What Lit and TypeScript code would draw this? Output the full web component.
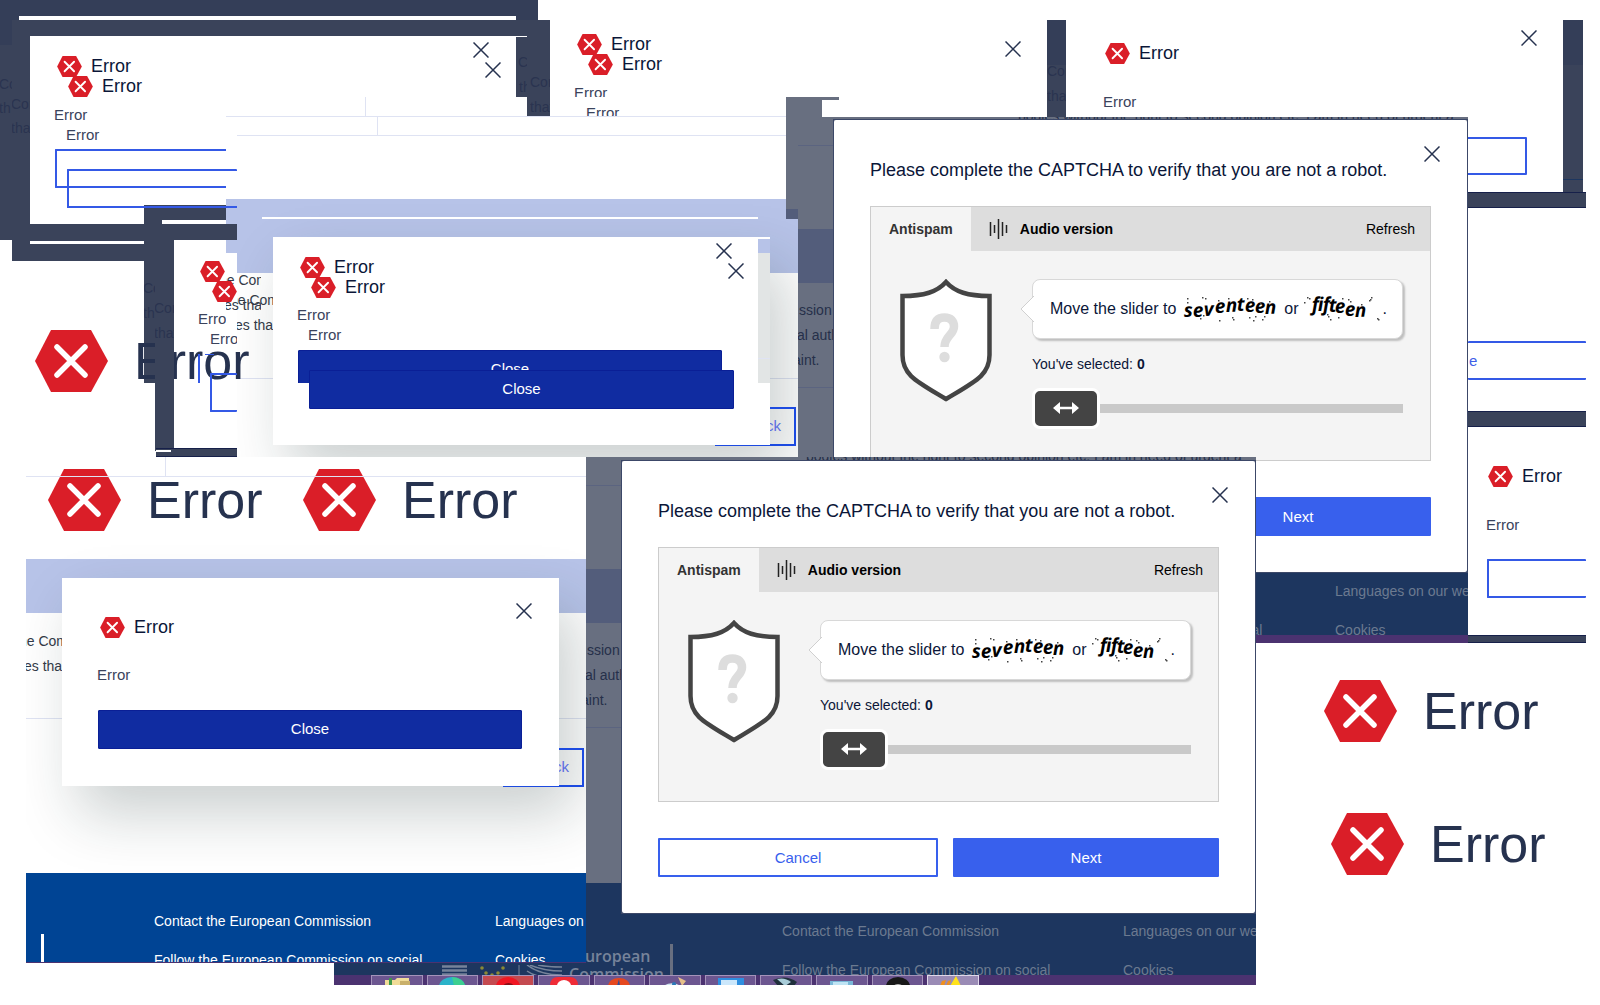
import { LitElement, html, css, svg, nothing } from "lit";
import { customElement, property } from "lit/decorators.js";
import { styleMap } from "lit/directives/style-map.js";

/** Red hexagon with a white cross and, unless it is bare, the heading next to it. */
@customElement("error-title")
class ErrorTitle extends LitElement {
  @property({ type: Boolean, reflect: true }) large = false;
  @property({ type: Boolean }) bare = false;
  @property() label = "Error";

  static styles = css`
    :host { display: block; }
    .row { display: flex; align-items: center; gap: 9px; min-height: 24px; }
    .mark { display: block; width: 25px; height: 21px; flex: none; }
    .text {
      margin: 0; font: 400 18px/24px "Liberation Sans", Arial, sans-serif;
      color: #0b1638; white-space: nowrap;
    }
    :host([large]) .row { gap: 26px; }
    :host([large]) .mark { width: 73px; height: 62px; }
    :host([large]) .text { font-size: 52px; line-height: 60px; color: #26324f; }
  `;

  render() {
    return html`
      <div class="row">
        <svg class="mark" viewBox="0 0 73 62" aria-hidden="true">
          <polygon points="16,0 56,0 73,31 56,62 16,62 0,31" fill="#da1e28" />
          <path d="M22 17 L50 45 M50 17 L22 45" stroke="#fff" stroke-width="5.500" stroke-linecap="round" />
        </svg>
        ${this.bare ? nothing : html`<h2 class="text">${this.label}</h2>`}
      </div>
    `;
  }
}

@customElement("close-button")
class CloseButton extends LitElement {
  static styles = css`
    :host { display: block; width: 16px; height: 16px; }
    .x { display: block; width: 16px; height: 16px; padding: 0; border: 0; background: none; }
    .icon { display: block; }
  `;
  render() {
    return html`
      <button class="x" aria-label="Close">
        <svg class="icon" width="16" height="16" viewBox="0 0 16 16">
          <path d="M0.5 0.5 L15.5 15.5 M15.5 0.5 L0.5 15.5" stroke="#26324f" stroke-width="1.5" />
        </svg>
      </button>
    `;
  }
}

/** Distorted word of the captcha: each letter has its own baseline. */
interface Warped {
  word: string;
  width: number;
  xs: string;
  ys: string;
  dots: [number, number][];
}

const SEVENTEEN: Warped = {
  word: "seventeen",
  width: 98,
  xs: "3 12 23 34 45 56 64 74 84",
  ys: "22 22 21 18 17 16 17 18 19",
  dots: [[6, 3], [6, 7], [21, 2], [24, 3], [37, 5], [66, 3], [71, 4], [88, 6], [19, 23], [22, 20],
    [38, 25], [51, 22], [52, 24], [68, 22], [72, 25], [74, 21], [81, 24], [83, 21], [47, 3], [79, 8]],
};

const FIFTEEN: Warped = {
  word: "fifteen",
  width: 74,
  xs: "8 14 19 25 31 41 51",
  ys: "16 16 16 17 18 21 22",
  dots: [[0, 7], [3, 2], [5, 3], [24, 21], [26, 24], [66, 4], [67, 2], [65, 5], [73, 23], [74, 24],
    [46, 6], [44, 4], [38, 3], [23, 19], [34, 22], [57, 9]],
};

@customElement("captcha-dialog")
class CaptchaDialog extends LitElement {
  @property() uid = "a";

  static styles = css`
    :host {
      display: block; box-sizing: border-box; background: #fff; padding: 38px 36px 36px;
      color: #0b1638; font-family: "Liberation Sans", Arial, sans-serif; position: relative;
      border-radius: 2px;
    }
    .close { position: absolute; top: 26px; right: 27px; }
    .title { margin: 0 0 24px; font-size: 18px; line-height: 24px; font-weight: 400; white-space: nowrap; }
    .box { border: 1px solid #ccc; background: #f4f4f4; box-sizing: border-box; height: 255px; }
    .tabs { display: flex; height: 44px; background: #ddd; color: #000; }
    .tab {
      border: 0; background: none; padding: 0 18px; display: flex; align-items: center; gap: 12px;
      font: 700 14px/20px "Liberation Sans", Arial, sans-serif; color: #000;
    }
    .active { background: #f4f4f4; color: #333; }
    .refresh { margin-left: auto; padding: 0 15px; font-weight: 400; }
    .body { display: flex; gap: 40px; padding: 28px 27px 0 29px; align-items: flex-start; }
    .shield { flex: none; display: block; }
    .side { flex: 1; min-width: 0; }
    .bubble {
      position: relative; box-sizing: border-box; height: 60px; border: 1px solid #d8d8d8;
      border-radius: 8px; background: #fff; box-shadow: 2px 2px 2px rgba(0, 0, 0, 0.22);
      display: flex; align-items: center; padding-left: 17px; gap: 5px;
      font-size: 16px; white-space: nowrap;
    }
    .tail { position: absolute; left: -13px; top: 16px; }
    .word { display: block; flex: none; overflow: visible; }
    .picked { display: block; margin-top: 15px; font-size: 14px; line-height: 20px; }
    .range {
      appearance: none; display: block; width: 100%; height: 40px; margin: 14px 0 0;
      background: linear-gradient(#c9c9c9, #c9c9c9) center / 100% 9px no-repeat;
    }
    .range::-webkit-slider-thumb {
      appearance: none; box-sizing: border-box; width: 68px; height: 41px;
      border: 3px solid #fff; border-radius: 8px;
      background: #444 url('data:image/svg+xml,<svg xmlns="http://www.w3.org/2000/svg" width="28" height="14" viewBox="0 0 28 14"><path d="M6 7H22" stroke="white" stroke-width="2.6"/><path d="M1 7L8 1V13ZM27 7L20 1V13Z" fill="white"/></svg>') center no-repeat;
    }
    .actions { display: grid; grid-template-columns: 20fr 19fr; gap: 15px; margin-top: 36px; }
    .btn {
      height: 39px; border: 2px solid #3860ed; border-radius: 1px; background: #fff; color: #3860ed;
      font: 400 15px/20px "Liberation Sans", Arial, sans-serif;
    }
    .primary { background: #3860ed; color: #fff; }
  `;

  private warped(w: Warped) {
    return html`
      <svg class="word" width=${w.width} height="28" viewBox="0 0 ${w.width} 28">
        <text x=${w.xs} y=${w.ys} rotate="-2" font-family="Open Sans, Noto Sans, sans-serif"
          font-size="19" font-weight="700" font-style="italic" fill="#000">${w.word}</text>
        ${w.dots.map(([x, y]) => svg`<rect x=${x} y=${y} width="1.500" height="1.500" fill="#444" />`)}
      </svg>
    `;
  }

  render() {
    const id = `slider-${this.uid}`;
    return html`
      <close-button class="close"></close-button>
      <h2 class="title">Please complete the CAPTCHA to verify that you are not a robot.</h2>
      <div class="box">
        <div class="tabs">
          <button class="tab active">Antispam</button>
          <button class="tab">
            <svg width="19" height="20" viewBox="0 0 19 20" aria-hidden="true">
              <path d="M1.5 3V17M5.5 6V14M9.5 0V20M13.5 3V17M17.5 6V14" stroke="#222" stroke-width="1.5" />
            </svg>
            Audio version
          </button>
          <button class="tab refresh">Refresh</button>
        </div>
        <div class="body">
          <svg class="shield" width="92" height="124" viewBox="0 0 92 124" aria-hidden="true">
            <path d="M46 3 C37 13 24 17 2.500 17 V76 C2.500 96 16 102 46 120 C76 102 89.500 96 89.500 76 V17 C68 17 55 13 46 3 Z"
              fill="#fff" stroke="#444" stroke-width="4.500" />
            <path d="M34.500 50 C34.500 41 39 38.500 44.500 38.500 C51 38.500 54 42 54 47.500 C54 56 44.500 57 44.500 68" fill="none"
              stroke="#ddd" stroke-width="8.500" />
            <circle cx="44.500" cy="78" r="5.200" fill="#ddd" />
          </svg>
          <div class="side">
            <div class="bubble">
              <svg class="tail" width="14" height="26" viewBox="0 0 14 26" aria-hidden="true">
                <path d="M14 0 L1 13 L14 26" fill="#fff" stroke="#d0d0d0" />
              </svg>
              <span>Move the slider to</span>${this.warped(SEVENTEEN)}<span>or</span>${this.warped(FIFTEEN)}<span>.</span>
            </div>
            <label class="picked" for=${id}>You've selected: <b>0</b></label>
            <input class="range" id=${id} type="range" min="0" max="20" value="0" />
          </div>
        </div>
      </div>
      <div class="actions">
        <button class="btn">Cancel</button>
        <button class="btn primary">Next</button>
      </div>
    `;
  }
}

type Box = [x: number, y: number, w: number, h: number];

const at = ([x, y, w, h]: Box) =>
  styleMap({ left: `${x}px`, top: `${y}px`, width: `${w}px`, height: `${h}px` });

/** A rectangle on the canvas that clips whatever it holds. */
const piece = (box: Box, cls: string, content: unknown = nothing) =>
  html`<div class="piece ${cls}" style=${at(box)}>${content}</div>`;

/** A text line, placed by its left edge and vertical middle. */
const line = (x: number, middle: number, text: string, cls = "") =>
  html`<span class="line ${cls}" style=${styleMap({ left: `${x}px`, top: `${middle - 10}px` })}>${text}</span>`;

const title = (x: number, middle: number, bare = false) =>
  html`<error-title class="spot" ?bare=${bare} style=${styleMap({ left: `${x}px`, top: `${middle - 12}px` })}></error-title>`;

const bigTitle = (x: number, y: number) =>
  html`<error-title large class="spot" style=${styleMap({ left: `${x}px`, top: `${y}px` })}></error-title>`;

const cross = (cx: number, cy: number) =>
  html`<close-button class="spot" style=${styleMap({ left: `${cx - 8}px`, top: `${cy - 8}px` })}></close-button>`;

const TASK_ICONS = [
  svg`<path d="M2 4H12L14 2H26V10H2Z" fill="#f0dc98"/><path d="M6 2H9V10H6Z" fill="#3f9a4a"/><path d="M17 5H27V10H17Z" fill="#c9b06a"/>`,
  svg`<path d="M1 10A13 9 0 0 1 27 10Z" fill="#2bb3c9"/><path d="M14 1A13 9 0 0 1 27 10H16Z" fill="#3ccf91"/>`,
  svg`<path d="M2 10A12 9 0 0 1 26 10Z" fill="#f01622"/><path d="M9 10A6 5 0 0 1 20 10Z" fill="#8a0f16"/>`,
  svg`<path d="M0 10Q0 1 8 1H20Q28 1 28 10Z" fill="#ef2b36"/><path d="M7 10A7 6 0 0 1 21 10Z" fill="#fff"/>`,
  svg`<path d="M3 10A11 8 0 0 1 25 10Z" fill="#e5481f"/><path d="M14 3L12 10H15Z" fill="#2a4fa0"/>`,
  svg`<path d="M3 10A9 5 0 0 1 19 10Z" fill="#cfe4ef"/><path d="M17 1L25 5L21 10Z" fill="#e6c08a"/><circle cx="13" cy="8" r="2" fill="#2a78b8"/>`,
  svg`<path d="M1 2H27V10H1Z" fill="#2f8fe0"/><path d="M4 4H20V10H4Z" fill="#cbe7fb"/>`,
  svg`<path d="M1 4Q14 -2 25 6L22 10H6Z" fill="#20303c"/><path d="M5 3Q13 1 19 6L13 10Z" fill="#a8ccd8"/>`,
  svg`<path d="M2 5H25V10H2Z" fill="#7ab8d8"/><path d="M5 6H20V10H5Z" fill="#bfe4f4"/>`,
  svg`<path d="M2 10A12 9 0 0 1 26 10Z" fill="#181818"/><path d="M9 10A6 4 0 0 1 19 10Z" fill="#e8e8e8"/>`,
  svg`<path d="M17 0L22 10H11Z" fill="#ffe21a"/><path d="M3 5L7 4L5 10H1Z" fill="#f0901c"/><path d="M9 5L12 4L10 10H7Z" fill="#f0901c"/>`,
];

@customElement("app-root")
class AppRoot extends LitElement {
  static styles = css`
    :host { display: block; font-family: "Liberation Sans", Arial, sans-serif; }
    .board { position: relative; min-height: 100vh; overflow: hidden; background: #fff; }
    .piece { position: absolute; box-sizing: border-box; overflow: hidden; }
    .spot { position: absolute; }
    .line {
      position: absolute; font-size: 15px; line-height: 20px; white-space: nowrap; color: #3a435c;
    }
    .white { background: #fff; }
    .dark { background: #3a435a; }
    .dark-top { background: linear-gradient(#343e58 45px, #3a435a 45px); }
    .edge { border-top: 1px solid #16204a; border-bottom: 1px solid #16204a; }
    .frame { border: 1px solid #3c4868; }
    .lavender { background: #b7c3e8; }
    .pale { background: #e2e5e5; }
    .rule { background: #dfe3f3; }
    .veil { background: #686f80; }
    .veil-band { background: #535d7b; }
    .veil-rule { background: #5b6480; }
    .night { background: #1d365f; }
    .purple { background: #4b3270; }
    .royal { background: #004494; }
    .ink { background: #3459e6; }
    .outline { border: 2px solid #3459e6; border-radius: 1px; }
    .open-right { border-right: 0; }
    .open-left { border-left: 0; }
    .faint { color: #2a3450; font-size: 14px; }
    .under { color: #26304a; font-size: 14px; }
    .body-text { color: #333a48; font-size: 14px; }
    .blue { color: #3f5fe8; }
    .link { color: #fff; font-size: 14px; text-decoration: none; }
    .dim { color: #6c7a90; font-size: 14px; text-decoration: none; }
    .logo { color: #76839a; font: 600 16px/20px "Open Sans", "Noto Sans", sans-serif; }
    .shade { box-shadow: 16px 28px 56px rgba(20, 40, 40, 0.22); overflow: visible; }
    .close {
      position: absolute; box-sizing: border-box; border: 1px solid #0a1f96; border-radius: 1px;
      background: #102ca1; color: #fff; font: 400 15px/20px "Liberation Sans", Arial, sans-serif;
      padding: 0 0 2px;
    }
    .back {
      position: absolute; box-sizing: border-box; border: 2px solid #1c4ae0; background: none; padding: 0 13px 2px 0;
      text-align: right; color: #5a6ce0; font: 400 15px/20px "Liberation Sans", Arial, sans-serif;
    }
    .tasks { display: grid; grid-template-columns: repeat(11, 1fr); gap: 4px; padding: 0 277px 0 37px; }
    .task {
      height: 24px; padding: 0; border: 1px solid #a493ba; background: #6c5690;
      display: flex; justify-content: center; align-items: flex-start;
    }
    .hot { background: #c44a50; }
    .current { background: #9a8bb5; border-color: #e0d8ea; }
  `;

  private link(x: number, middle: number, text: string, cls: string) {
    return html`<a class="line ${cls}" href="#" style=${styleMap({ left: `${x}px`, top: `${middle - 10}px` })}>${text}</a>`;
  }

  /** Dimmed page with the captcha dialog over it. */
  private captchaFrame(box: Box, dialogTop: number, uid: string) {
    return piece(box, "veil", html`
      ${piece([0, 28, 36, 1], "veil-rule")}
      ${piece([0, 112, 36, 54], "veil-band")}
      ${line(1, 193, "ssion", "under")}
      ${line(-1, 218, "al auth", "under")}
      ${line(-5, 243, "aint.", "under")}
      ${piece([0, 270, 36, 1], "veil-rule")}
      ${line(220, -1, "bodies without the right to second opinion etc. I am in need of urgent a", "under")}
      ${piece([0, 426, 670, 92], "night", html`
        ${line(-10, 73, "European", "logo")}
        ${piece([84, 61, 3, 31], "veil")}
        ${this.link(196, 48, "Contact the European Commission", "dim")}
        ${this.link(196, 87, "Follow the European Commission on social", "dim")}
        ${this.link(537, 48, "Languages on our website", "dim")}
        ${this.link(537, 87, "Cookies", "dim")}
      `)}
      ${piece([0, 518, 670, 10], "purple")}
      ${piece([35, dialogTop - 1, 635, 454], "frame")}
      <captcha-dialog class="spot" style=${at([36, dialogTop, 633, 452])} uid=${uid}></captcha-dialog>
    `);
  }

  private closeButton(box: Box) {
    return html`<button class="close" style=${at(box)}>Close</button>`;
  }

  private backButton(box: Box) {
    return html`<button class="back" style=${at(box)}>Back</button>`;
  }

  /** Two dark frames, one shifted over the other. */
  private darkFrames() {
    return html`
      ${piece([0, 0, 538, 240], "dark-top")}
      ${piece([19, 16, 497, 4], "white")}
      ${piece([12, 20, 538, 241], "dark")}
      ${piece([30, 36, 497, 188], "white")}
      ${piece([30, 241, 114, 3], "white")}
      ${piece([516, 37, 11, 60], "dark", html`${line(2, 25, "Co", "faint")}${line(3, 50, "th", "faint")}`)}
      ${piece([0, 70, 12, 60], "", html`${line(-1, 14, "Co", "faint")}${line(-1, 38, "th", "faint")}`)}
      ${piece([12, 90, 18, 60], "", html`${line(-1, 14, "Con", "faint")}${line(-1, 38, "that", "faint")}`)}
      ${piece([530, 60, 20, 60], "", html`${line(0, 22, "Con", "faint")}${line(0, 47, "that", "faint")}`)}
      ${title(57, 66)} ${title(68, 86)}
      ${cross(481, 50)} ${cross(493, 70)}
      ${line(54, 115, "Error")} ${line(66, 135, "Error")}
      ${piece([55, 149, 172, 39], "outline open-right")}
    `;
  }

  private topFrames() {
    return html`
      ${piece([550, 20, 497, 77], "", html`${line(24, 73, "Error")}`)}
      ${piece([550, 97, 236, 19], "", html`${line(36, 16, "Error")}`)}
      ${title(577, 44)} ${title(588, 64)}
      ${cross(1013, 49)}
      ${piece([1047, 20, 19, 97], "dark-top", html`${line(0, 51, "Con", "faint")}${line(0, 76, "that", "faint")}`)}
      ${title(1105, 53)} ${cross(1529, 38)} ${line(1103, 102, "Error")}
      ${piece([1563, 20, 20, 172], "dark-top", piece([0, 159, 20, 1], "night"))}
      ${piece([1460, 137, 67, 38], "outline")}
      ${piece([1468, 192, 118, 16], "dark edge")}
    `;
  }

  private lightFrames() {
    return html`
      ${piece([226, 97, 301, 20], "white", piece([139, 0, 1, 20], "rule"))}
      ${piece([226, 116, 560, 341], "white", html`
        ${piece([0, 0, 560, 1], "rule")}
        ${piece([0, 83, 560, 54], "lavender")}
      `)}
      ${piece([237, 116, 561, 341], "white", html`
        ${piece([0, 0, 549, 1], "rule")}
        ${piece([140, 0, 1, 20], "rule")}
        ${piece([0, 19, 561, 1], "rule")}
        ${piece([0, 83, 561, 74], "lavender")}
        ${piece([0, 262, 561, 1], "rule")}
        ${line(-7, 184, "he Com", "body-text")} ${line(-2, 209, "es that", "body-text")}
        ${piece([36, 121, 497, 208], "white shade")}
        ${piece([25, 101, 496, 2], "white")}
        ${this.backButton([478, 291, 81, 39])}
        ${piece([36, 121, 497, 208], "white")}
      `)}
      ${piece([758, 239, 12, 14], "lavender")}
      ${piece([758, 253, 12, 130], "pale", piece([0, 105, 12, 1], "rule"))}
      ${piece([226, 262, 35, 60], "", html`${line(-7, 18, "he Com", "body-text")}${line(-2, 43, "es that", "body-text")}`)}
      ${title(300, 267)} ${title(311, 287)}
      ${cross(724, 251)} ${cross(736, 271)}
      ${line(297, 315, "Error")} ${line(308, 335, "Error")}
      ${this.closeButton([298, 350, 424, 39])}
      ${piece([298, 383, 12, 6], "white")}
      ${this.closeButton([309, 370, 425, 39])}
    `;
  }

  private cornerFrame() {
    return html`
      ${piece([67, 169, 170, 39], "outline open-right")}
      ${piece([144, 205, 82, 15], "dark")}
      ${piece([144, 205, 18, 20], "dark")}
      ${piece([144, 220, 11, 163], "dark", html`${line(-1, 68, "Co", "faint")}${line(-1, 93, "th", "faint")}`)}
      ${piece([155, 224, 82, 16], "dark")}
      ${piece([174, 240, 52, 208], "white")}
      ${bigTitle(35, 330)}
      ${piece([155, 240, 19, 211], "dark", html`${line(-1, 68, "Con", "faint")}${line(-1, 93, "that", "faint")}`)}
      ${piece([156, 448, 81, 9], "dark edge")}
      ${piece([156, 450, 15, 2], "white")}
      ${piece([67, 206, 170, 2], "ink")}
      ${title(200, 271, true)} ${title(212, 291, true)}
      ${piece([198, 305, 28, 80], "", html`${line(0, 14, "Error")}`)}
      ${piece([210, 325, 27, 30], "", html`${line(0, 14, "Error")}`)}
      ${piece([198, 354, 2, 29], "ink")}
      ${piece([205, 354, 9, 1], "ink")}
      ${piece([210, 373, 27, 39], "outline open-right")}
    `;
  }

  private rightFrame() {
    return html`
      ${piece([1468, 208, 118, 203], "white", html`${line(1, 153, "e", "blue")}`)}
      ${piece([1468, 341, 118, 39], "outline open-right open-left")}
      ${piece([1468, 411, 118, 16], "dark edge")}
      ${title(1488, 476)}
      ${line(1486, 525, "Error")}
      ${piece([1487, 559, 99, 39], "outline open-right")}
      ${piece([1468, 635, 118, 8], "dark edge")}
      ${bigTitle(1324, 680)} ${bigTitle(1331, 813)}
    `;
  }

  private bottomLeftFrame() {
    return html`
      ${bigTitle(48, 469)} ${bigTitle(303, 469)}
      ${piece([26, 457, 560, 506], "", html`
        ${piece([139, 0, 1, 19], "rule")}
        ${piece([0, 19, 560, 1], "rule")}
        ${piece([0, 102, 560, 54], "lavender")}
        ${line(-7, 184, "he Com", "body-text")}
        ${line(-2, 209, "es that", "body-text")}
        ${piece([0, 261, 560, 1], "rule")}
        ${piece([36, 121, 497, 208], "white shade")}
        ${this.backButton([477, 291, 81, 39])}
        ${piece([36, 121, 497, 208], "white")}
        ${title(74, 170)} ${cross(498, 154)}
        ${line(71, 218, "Error")}
        ${this.closeButton([72, 253, 424, 39])}
        ${piece([0, 416, 560, 89], "royal", html`
          ${piece([15, 61, 3, 28], "white")}
          ${line(-2, 94, "n", "link")}
          ${this.link(128, 48, "Contact the European Commission", "link")}
          ${this.link(128, 87, "Follow the European Commission on social", "link")}
          ${this.link(469, 48, "Languages on our", "link")}
          ${this.link(469, 87, "Cookies", "link")}
        `)}
        ${piece([0, 505, 560, 1], "purple")}
      `)}
    `;
  }

  private taskbar() {
    return html`
      ${piece([334, 963, 922, 12], "", html`
        ${piece([0, 0, 252, 12], "night", html`
          <svg width="235" height="12" viewBox="0 0 235 12" aria-hidden="true">
            <path d="M108 1.500H133M108 5.500H133M108 9.500H133" stroke="#76839a" stroke-width="2.500" />
            <g fill="#8b8a35">
              <circle cx="148" cy="3" r="1.800" /><circle cx="152" cy="8" r="1.800" /><circle cx="158" cy="10" r="1.800" />
              <circle cx="164" cy="8" r="1.800" /><circle cx="169" cy="3" r="1.800" />
            </g>
            <path d="M185 0V12" stroke="#76839a" />
            <path d="M193 0Q206 10 228 10M196 0Q210 6 228 6M204 0Q214 2 228 2M193 6Q200 11 210 12" fill="none"
              stroke="#76839a" stroke-width="1.500" />
          </svg>
        `)}
        ${line(235, 11, "Commission", "logo")}
      `)}
      ${piece([334, 975, 922, 10], "purple tasks", TASK_ICONS.map((icon, i) => html`
        <button class="task ${i === 2 ? "hot" : i === 10 ? "current" : ""}" aria-label="Window ${i + 1}">
          <svg width="28" height="10" viewBox="0 0 28 10">${icon}</svg>
        </button>
      `))}
    `;
  }

  render() {
    return html`
      <main class="board">
        ${this.darkFrames()}
        ${this.lightFrames()}
        ${this.topFrames()}
        ${this.cornerFrame()}
        ${piece([786, 97, 53, 3], "veil")}
        ${piece([786, 97, 36, 20], "veil")}
        ${piece([786, 117, 12, 102], "veil", piece([0, 92, 12, 10], "veil-band"))}
        ${this.rightFrame()}
        ${this.captchaFrame([798, 117, 670, 526], 3, "a")}
        ${this.bottomLeftFrame()}
        ${this.captchaFrame([586, 457, 670, 528], 4, "b")}
        ${this.taskbar()}
      </main>
    `;
  }
}
